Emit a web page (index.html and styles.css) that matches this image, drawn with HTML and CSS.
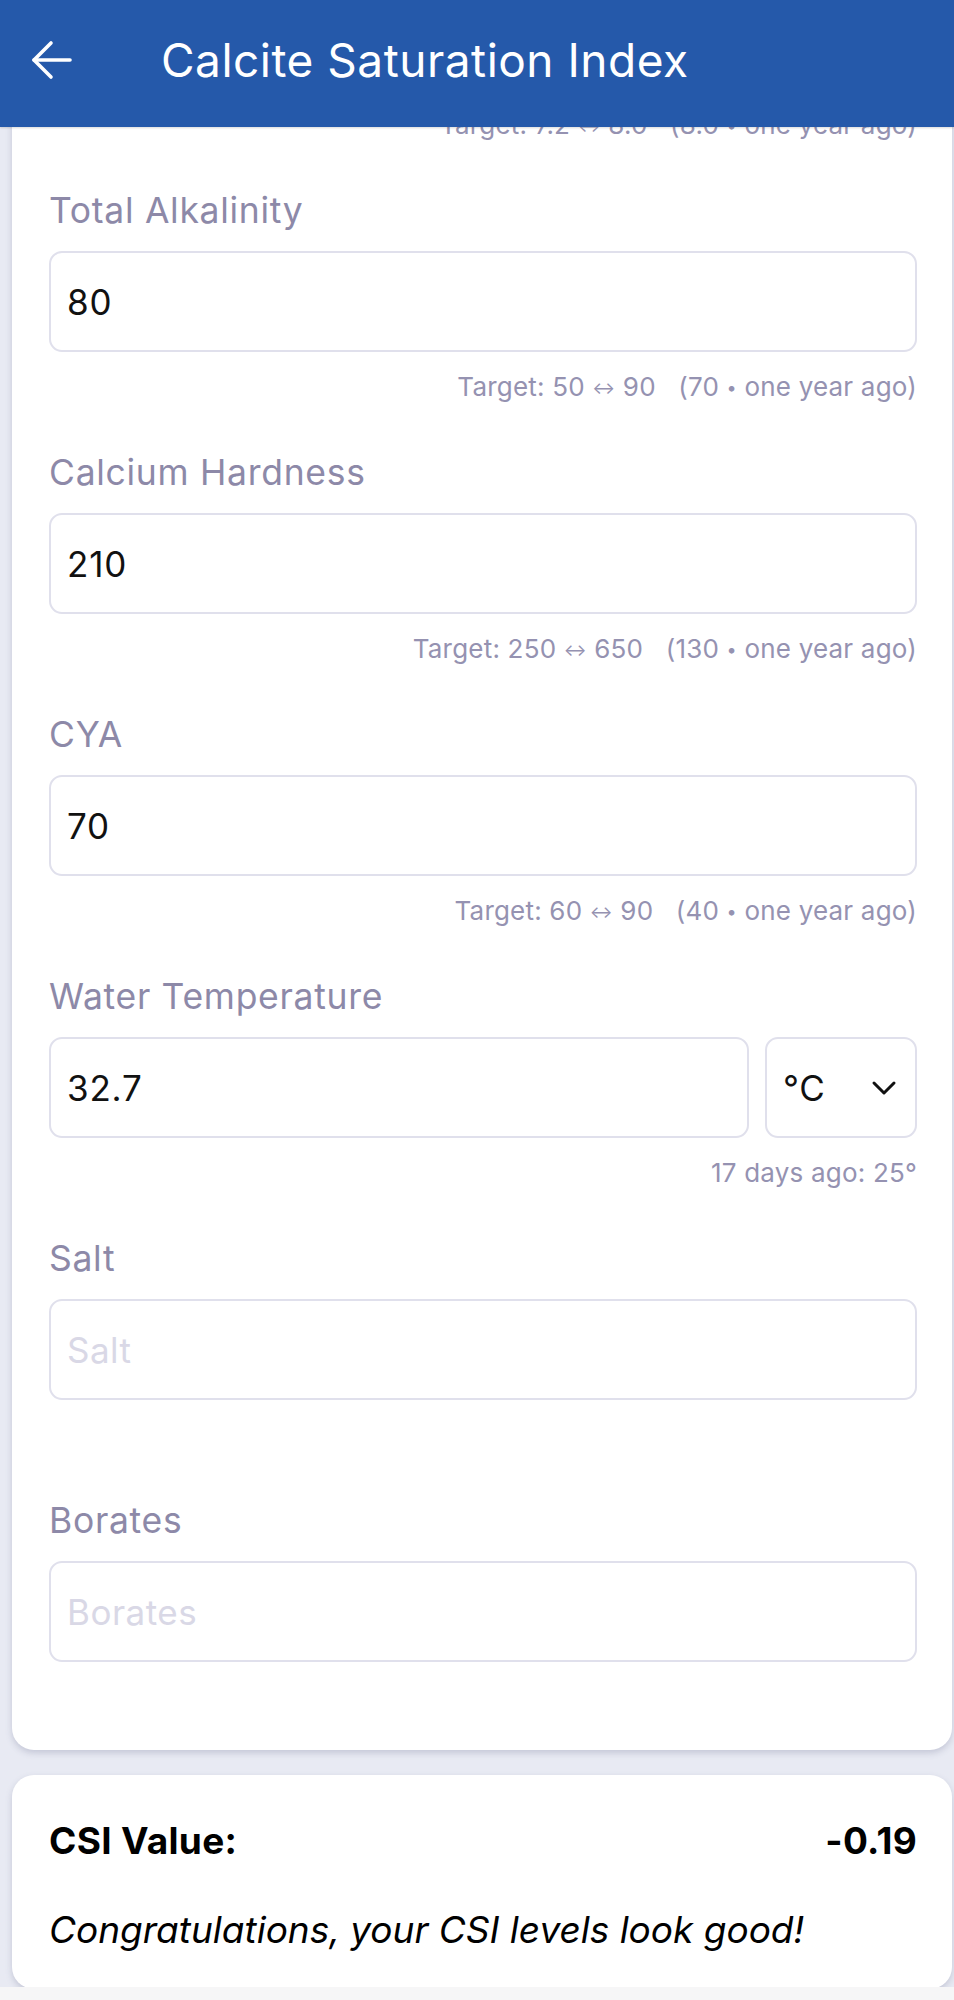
FILE: index.html
```html
<!DOCTYPE html>
<html lang="en">
<head>
<meta charset="utf-8">
<title>Calcite Saturation Index</title>
<link rel="stylesheet" href="styles.css">
</head>
<body>
<header class="appbar">
  <button class="back" aria-label="Back">
    <svg width="42" height="40" viewBox="0 0 42 40" fill="none" stroke="#fff" stroke-width="3.6" stroke-linecap="round" stroke-linejoin="round">
      <path d="M39 20H3"/>
      <path d="M20 3L3 20L20 37"/>
    </svg>
  </button>
  <h1 class="title">Calcite Saturation Index</h1>
</header>

<main class="content">
  <section class="card form-card">
    <div class="hint hint-top">Target: 7.2 <span class="arr">↔</span> 8.0&nbsp;&nbsp;&nbsp;(8.0 <span class="dot">•</span> one year ago)</div>

    <div class="field">
      <label class="label">Total Alkalinity</label>
      <div class="input"><span class="value">80</span></div>
      <div class="hint">Target: 50 <span class="arr">↔</span> 90&nbsp;&nbsp;&nbsp;(70 <span class="dot">•</span> one year ago)</div>
    </div>

    <div class="field">
      <label class="label">Calcium Hardness</label>
      <div class="input"><span class="value">210</span></div>
      <div class="hint">Target: 250 <span class="arr">↔</span> 650&nbsp;&nbsp;&nbsp;(130 <span class="dot">•</span> one year ago)</div>
    </div>

    <div class="field">
      <label class="label">CYA</label>
      <div class="input"><span class="value">70</span></div>
      <div class="hint">Target: 60 <span class="arr">↔</span> 90&nbsp;&nbsp;&nbsp;(40 <span class="dot">•</span> one year ago)</div>
    </div>

    <div class="field">
      <label class="label">Water Temperature</label>
      <div class="row">
        <div class="input grow"><span class="value">32.7</span></div>
        <div class="input select">
          <span class="value">°C</span>
          <svg class="chev" width="26" height="16" viewBox="0 0 26 16" fill="none" stroke="#111" stroke-width="3" stroke-linecap="round" stroke-linejoin="round">
            <path d="M3 3L13 13L23 3"/>
          </svg>
        </div>
      </div>
      <div class="hint">17 days ago: 25°</div>
    </div>

    <div class="field">
      <label class="label">Salt</label>
      <div class="input"><span class="placeholder">Salt</span></div>
      <div class="hint"></div>
    </div>

    <div class="field last">
      <label class="label">Borates</label>
      <div class="input"><span class="placeholder">Borates</span></div>
    </div>
  </section>

  <section class="card result-card">
    <div class="result-row">
      <span class="result-label">CSI Value:</span>
      <span class="result-value">-0.19</span>
    </div>
    <p class="result-msg">Congratulations, your CSI levels look good!</p>
  </section>
</main>
<div class="bottom-strip"></div>
</body>
</html>
```

FILE: styles.css
```css
* { box-sizing: border-box; }

html, body {
  margin: 0;
  padding: 0;
}

body {
  width: 954px;
  height: 2000px;
  overflow: hidden;
  background: #e8eaf3;
  font-family: "Inter", "Open Sans", sans-serif;
  position: relative;
}

.appbar {
  position: absolute;
  top: 0;
  left: 0;
  right: 0;
  height: 127px;
  background: #2559aa;
  display: flex;
  align-items: center;
  padding-left: 31px;
  z-index: 10;
  box-shadow: 0 1px 2px rgba(0,0,0,0.15);
}

.back {
  background: none;
  border: 0;
  padding: 0;
  margin: 0;
  width: 42px;
  height: 40px;
  display: flex;
  margin-top: -8px;
}

.title {
  margin: 0 0 0 88px;
  margin-top: -8px;
  color: #fff;
  font-weight: 400;
  font-size: 46px;
  letter-spacing: 0.5px;
}

.content {
  padding: 0 2px 0 12px;
  display: flex;
  flex-direction: column;
  gap: 25px;
}

.card {
  background: #fff;
  border-radius: 0 0 22px 22px;
  box-shadow: 0 3px 6px rgba(90, 95, 130, 0.25);
}

.form-card {
  padding: 108px 35px 0 37px;
  height: 1750px;
}

.hint {
  font-size: 26px;
  line-height: 34px;
  height: 34px;
  color: #9592b1;
  text-align: right;
  margin-top: 18px;
  white-space: pre;
  letter-spacing: 0.2px;
}

.arr {
  font-size: 17px;
  position: relative;
  top: -2px;
}

.dot {
  font-size: 18px;
  position: relative;
  top: -2px;
}

.hint-top {
  margin-top: 0;
  margin-bottom: 49px;
}

.field {
  display: flex;
  flex-direction: column;
}

.field + .field {
  margin-top: 49px;
}

.label {
  font-size: 35.5px;
  line-height: 40px;
  height: 40px;
  color: #8d89a8;
  margin-bottom: 20px;
  letter-spacing: 0.7px;
}

.row {
  display: flex;
  gap: 16px;
}

.input {
  height: 101px;
  border: 2px solid #e0e0ec;
  border-radius: 13px;
  display: flex;
  align-items: center;
  padding: 0 16px;
  background: #fff;
}

.grow { flex: 1; }

.select {
  width: 152px;
  justify-content: space-between;
  padding: 0 18px 0 16px;
}

.value {
  font-size: 35px;
  color: #111;
  letter-spacing: 0.8px;
}

.placeholder {
  font-size: 35px;
  color: #d9d8e6;
  letter-spacing: 0.5px;
}

.result-card {
  border-radius: 22px;
  height: 214px;
  padding: 35px 35px 0 37px;
}

.result-row {
  display: flex;
  justify-content: space-between;
  align-items: center;
  height: 60px;
}

.result-label, .result-value {
  font-size: 37px;
  font-weight: 700;
  color: #000;
  letter-spacing: 0.3px;
}

.result-msg {
  margin: 38px 0 0;
  font-style: italic;
  font-size: 37px;
  color: #000;
  line-height: 44px;
}

.bottom-strip {
  position: absolute;
  left: 0;
  right: 0;
  bottom: 0;
  height: 13px;
  background: #f6f6f7;
}
```
